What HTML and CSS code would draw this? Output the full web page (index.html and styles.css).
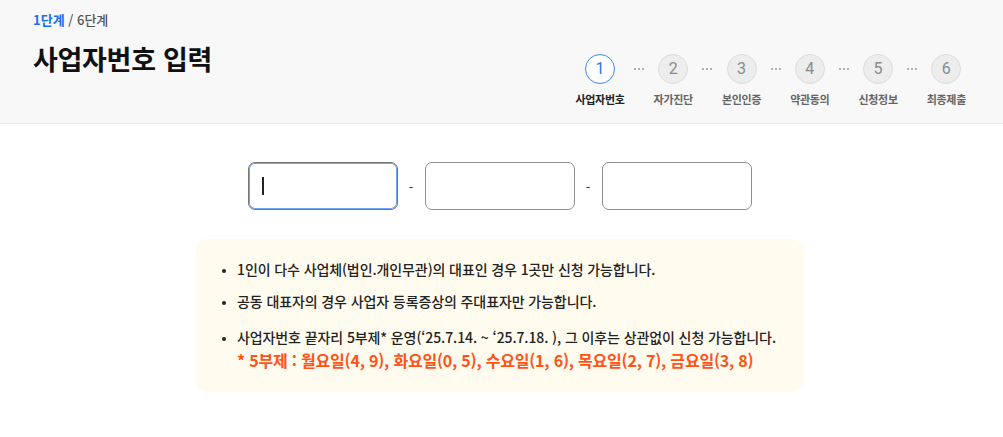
FILE: index.html
```html
<!DOCTYPE html>
<html lang="ko">
<head>
  <meta charset="UTF-8" />
  <meta name="viewport" content="width=device-width, initial-scale=1.0"/>
  <title>사업자번호 입력</title>
  <link rel="stylesheet" href="styles.css">
</head>
<body>
  <!-- 상단 헤더 -->
  <header class="top">
    <div class="crumb"><span class="now">1단계</span> / 6단계</div>
    <div class="title-row">
      <h1>사업자번호 입력</h1>

      <!-- 진행 단계 -->
      <ol class="steps">
        <li class="step active"><span class="num">1</span><span class="lbl">사업자번호</span></li>
        <li class="dots"><i></i><i></i><i></i></li>
        <li class="step"><span class="num">2</span><span class="lbl">자가진단</span></li>
        <li class="dots"><i></i><i></i><i></i></li>
        <li class="step"><span class="num">3</span><span class="lbl">본인인증</span></li>
        <li class="dots"><i></i><i></i><i></i></li>
        <li class="step"><span class="num">4</span><span class="lbl">약관동의</span></li>
        <li class="dots"><i></i><i></i><i></i></li>
        <li class="step"><span class="num">5</span><span class="lbl">신청정보</span></li>
        <li class="dots"><i></i><i></i><i></i></li>
        <li class="step"><span class="num">6</span><span class="lbl">최종제출</span></li>
      </ol>
    </div>
  </header>

  <main class="content">
    <!-- 사업자번호 입력칸 -->
    <div class="biz-row">
      <div class="field">
        <input type="text" class="biz focused" maxlength="3">
        <span class="caret"></span>
      </div>
      <span class="sep">-</span>
      <input type="text" class="biz" maxlength="2">
      <span class="sep">-</span>
      <input type="text" class="biz" maxlength="5">
    </div>

    <!-- 안내 -->
    <div class="notice">
      <ul>
        <li>1인이 다수 사업체(법인.개인무관)의 대표인 경우 1곳만 신청 가능합니다.</li>
        <li>공동 대표자의 경우 사업자 등록증상의 주대표자만 가능합니다.</li>
        <li class="last">사업자번호 끝자리 5부제* 운영(‘25.7.14. ~ ‘25.7.18. ), 그 이후는 상관없이 신청 가능합니다.
          <p class="red">* 5부제 : 월요일(4, 9), 화요일(0, 5), 수요일(1, 6), 목요일(2, 7), 금요일(3, 8)</p>
        </li>
      </ul>
    </div>
  </main>
</body>
</html>
```

FILE: styles.css
```css
body {
  margin: 0;
  font-family: "Noto Sans CJK KR", "Noto Sans", sans-serif;
  background-color: #fff;
  color: #222;
}

.top {
  height: 124px;
  box-sizing: border-box;
  background-color: #f8f8f8;
  border-bottom: 1px solid #ebebeb;
  padding: 10px 37px 0 33px;
}

.crumb {
  font-size: 13px;
  line-height: 20px;
  font-weight: 500;
  color: #555;
}

.crumb .now {
  color: #1b6ef3;
  font-weight: 700;
}

.title-row {
  display: flex;
  justify-content: space-between;
  align-items: flex-start;
}

h1 {
  margin: 11px 0 0;
  font-size: 27px;
  line-height: 36px;
  font-weight: 700;
  color: #111;
  letter-spacing: -0.3px;
}

.steps {
  list-style: none;
  display: flex;
  margin: 24px 0 0;
  padding: 0;
}

.step {
  display: flex;
  flex-direction: column;
  align-items: center;
}

.num {
  width: 30px;
  height: 30px;
  box-sizing: border-box;
  border-radius: 50%;
  border: 1px solid #dcdcdc;
  background-color: #ededed;
  color: #8a8a8a;
  font-size: 16px;
  line-height: 28px;
  text-align: center;
  font-family: "Roboto", "Noto Sans", sans-serif;
}

.lbl {
  margin-top: 7px;
  font-size: 11px;
  line-height: 16px;
  font-weight: 700;
  color: #666;
  letter-spacing: -0.3px;
}

.step.active .num {
  background-color: #fff;
  border: 1.5px solid #3d85f5;
  color: #2f73e6;
  line-height: 27px;
}

.step.active .lbl {
  color: #222;
}

/* 단계 사이 점 */
.dots {
  width: 29px;
  height: 30px;
  display: flex;
  justify-content: center;
  align-items: center;
  gap: 2px;
}

.dots i {
  width: 2px;
  height: 2px;
  border-radius: 50%;
  background-color: #9a9a9a;
}

.content {
  padding: 38px 4px 0 0;
}

.biz-row {
  display: flex;
  justify-content: center;
  align-items: center;
}

.field {
  position: relative;
}

.biz {
  display: block;
  width: 150px;
  height: 48px;
  box-sizing: border-box;
  border: 1px solid #8f8f8f;
  border-radius: 7px;
  background-color: #fff;
  padding: 0 12px;
  font-size: 16px;
  outline: none;
}

.biz.focused {
  border-color: #777;
  box-shadow: inset 0 0 0 1px #6ea2f3;
}

.caret {
  position: absolute;
  left: 14px;
  top: 15px;
  width: 2px;
  height: 18px;
  background-color: #222;
}

.sep {
  width: 27px;
  text-align: center;
  font-size: 13px;
  color: #333;
}

.notice {
  width: 607px;
  margin: 29px auto 0;
  box-sizing: border-box;
  background-color: #fffbee;
  border-radius: 10px;
  padding: 20px 20px 22px 0;
}

.notice ul {
  margin: 0;
  padding-left: 41px;
}

.notice li {
  font-size: 14px;
  line-height: 20px;
  font-weight: 500;
  color: #222;
  margin-bottom: 12px;
  letter-spacing: -0.1px;
}

.notice li:nth-child(2) {
  margin-bottom: 16px;
}

.notice li::marker {
  font-size: 11px;
}

.notice li.last {
  margin-bottom: 0;
}

.red {
  margin: 3px 0 0;
  font-size: 16px;
  line-height: 20px;
  font-weight: 700;
  color: #ff5319;
  letter-spacing: -0.2px;
}
```
